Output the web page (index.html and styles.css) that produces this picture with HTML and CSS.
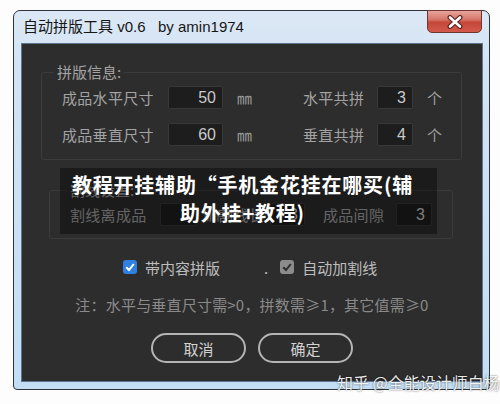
FILE: index.html
```html
<!DOCTYPE html>
<html lang="zh-CN">
  <head>
    <meta charset="UTF-8" />
    <meta name="viewport" content="width=device-width, initial-scale=1.0" />
    <title>自动拼版工具</title>
    <link rel="stylesheet" href="styles.css">
  </head>
  <body>
    <div class="window">
      <div class="titlebar">
        <span class="title">自动拼版工具 v0.6&nbsp;&nbsp; by amin1974</span>
        <button class="close" type="button">
          <svg width="18" height="14" viewBox="0 0 18 14">
            <path d="M4 2.5 L14 11.5 M14 2.5 L4 11.5" stroke="#5a2623" stroke-width="5" stroke-linecap="round" fill="none" />
            <path d="M4 2.5 L14 11.5 M14 2.5 L4 11.5" stroke="#ffffff" stroke-width="2.6" stroke-linecap="round" fill="none" />
          </svg>
        </button>
      </div>

      <div class="client">
        <fieldset class="group group-size">
          <legend>拼版信息:</legend>
          <div class="row">
            <label>成品水平尺寸</label>
            <span class="field">50</span>
            <span class="unit">㎜</span>
            <label>水平共拼</label>
            <span class="field">3</span>
            <span class="unit">个</span>
          </div>
          <div class="row">
            <label>成品垂直尺寸</label>
            <span class="field">60</span>
            <span class="unit">㎜</span>
            <label>垂直共拼</label>
            <span class="field">4</span>
            <span class="unit">个</span>
          </div>
        </fieldset>

        <fieldset class="group group-cut">
          <legend>割线设置:</legend>
          <div class="row row-cut">
            <label>割线离成品</label>
            <span class="field">2</span>
            <span class="unit">㎜</span>
            <label>割线长</label>
            <span class="field">3</span>
            <label class="gap-label">成品间隙</label>
            <span class="field">3</span>
          </div>
        </fieldset>

        <div class="options">
          <span class="check check-on">
            <svg width="14" height="14" viewBox="0 0 14 14">
              <path d="M3.2 7.2 L6 10 L10.8 4" stroke="#ffffff" stroke-width="2" fill="none" />
            </svg>
          </span>
          <span class="option-text">带内容拼版</span>
          <span class="dot">.</span>
          <span class="check check-off">
            <svg width="14" height="14" viewBox="0 0 14 14">
              <path d="M3.2 7.2 L6 10 L10.8 4" stroke="#2d2d2d" stroke-width="2" fill="none" />
            </svg>
          </span>
          <span class="option-text">自动加割线</span>
        </div>

        <p class="note">注：水平与垂直尺寸需&gt;0，拼数需≥1，其它值需≥0</p>

        <div class="actions">
          <button class="pill" type="button">取消</button>
          <button class="pill" type="button">确定</button>
        </div>

        <div class="caption">教程开挂辅助“手机金花挂在哪买(辅<br />助外挂+教程)</div>
      </div>
    </div>

    <div class="watermark">知乎 @全能设计师白杨</div>
  </body>
</html>
```

FILE: styles.css
```css
body {
  margin: 0;
  background-color: #fdfdfd;
  font-family: "Noto Sans CJK SC", "Noto Sans", sans-serif;
}

.window {
  display: flex;
  flex-direction: column;
  box-sizing: border-box;
  width: 477px;
  height: 380px;
  margin: 10px 0 0 13px;
  padding: 0 6px 7px 7px;
  border: 1px solid #303438;
  border-radius: 7px 7px 4px 4px;
  background: linear-gradient(to bottom, #dce8f5 0, #d2e3f4 60px, #c2def5 100%);
}

.titlebar {
  display: flex;
  align-items: flex-start;
  height: 32px;
}

.title {
  padding-left: 2px;
  line-height: 32px;
  font-size: 15px;
  color: #161616;
  font-family: "Liberation Sans", "Noto Sans CJK SC", sans-serif;
}

.close {
  display: flex;
  align-items: center;
  justify-content: center;
  margin: -1px 1px 0 auto;
  width: 55px;
  height: 23px;
  padding: 0;
  border: 1px solid #6e3631;
  border-radius: 0 0 5px 5px;
  background: linear-gradient(to bottom, #e6a49a 0, #d7766a 40%, #c4473a 55%, #d45a4b 100%);
}

.client {
  position: relative;
  flex: 1;
  background-color: #2d2d2d;
  border: 1px solid #5e7690;
}

.group {
  margin: 0;
  border: 1px solid #3b3b3b;
  border-radius: 3px;
}

.group legend {
  padding: 0 3px;
  line-height: 20px;
  font-size: 15px;
  color: #a3a3a3;
}

.group-size {
  margin: 18px 20px 0 19px;
  padding: 4px 0 13px 20px;
}

.group-size legend {
  margin-left: -8px;
}

.group-cut {
  margin: 20px 29px 0 27px;
  padding: 3px 0 12px 20px;
}

.group-cut legend {
  margin-left: -3px;
}

.row {
  display: grid;
  grid-template-columns: 106px 55px 80px 74px 36px auto;
  grid-auto-rows: 23px;
  align-items: center;
  font-size: 15px;
  color: #a3a3a3;
}

.row + .row {
  margin-top: 14px;
}

.row-cut {
  grid-template-columns: 90px 36px 22px 52px 35px 91px 36px;
}

.row label {
  letter-spacing: 0.3px;
}

.gap-label {
  padding-left: 18px;
}

.field {
  box-sizing: border-box;
  height: 23px;
  padding-right: 6px;
  background-color: #1d1d1d;
  border: 1px solid #383838;
  border-radius: 2px;
  text-align: right;
  line-height: 21px;
  font-family: "Liberation Sans", sans-serif;
  font-size: 16px;
  color: #c9c9c9;
}

.unit {
  padding-left: 14px;
  color: #9d9d9d;
}

.row-cut .unit {
  padding-left: 8px;
}

.options {
  display: flex;
  align-items: center;
  height: 20px;
  margin-top: 18px;
  padding-left: 101px;
  font-size: 15px;
  color: #bdbdbd;
}

.check {
  display: flex;
  width: 14px;
  height: 14px;
  border-radius: 3px;
}

.check-on {
  background-color: #2f80e0;
}

.check-off {
  margin-left: 12px;
  background-color: #8c8c8c;
}

.option-text {
  margin-left: 8px;
}

.dot {
  margin-left: 44px;
}

.note {
  margin: 18px 0 0;
  line-height: 20px;
  text-align: center;
  font-size: 15px;
  letter-spacing: 0.2px;
  color: #8a8a8a;
}

.actions {
  display: flex;
  justify-content: center;
  gap: 12px;
  margin-top: 18px;
}

.pill {
  width: 95px;
  height: 30px;
  padding: 0;
  border: 2px solid #b4b4b4;
  border-radius: 15px;
  background-color: transparent;
  font-family: "Noto Sans CJK SC", sans-serif;
  font-size: 15px;
  color: #d2d2d2;
}

.caption {
  position: absolute;
  left: 38px;
  top: 124px;
  width: 377px;
  height: 66px;
  box-sizing: border-box;
  padding: 3px 12px 0 0;
  background-color: rgba(0, 0, 0, 0.38);
  text-align: center;
  line-height: 28px;
  font-size: 20px;
  font-weight: bold;
  letter-spacing: 0.8px;
  color: #ffffff;
}

.watermark {
  position: absolute;
  left: 337px;
  top: 372px;
  line-height: 20px;
  font-size: 16px;
  color: rgba(255, 255, 255, 0.92);
  text-shadow: 0 0 2px rgba(0, 0, 0, 0.7);
}
```
